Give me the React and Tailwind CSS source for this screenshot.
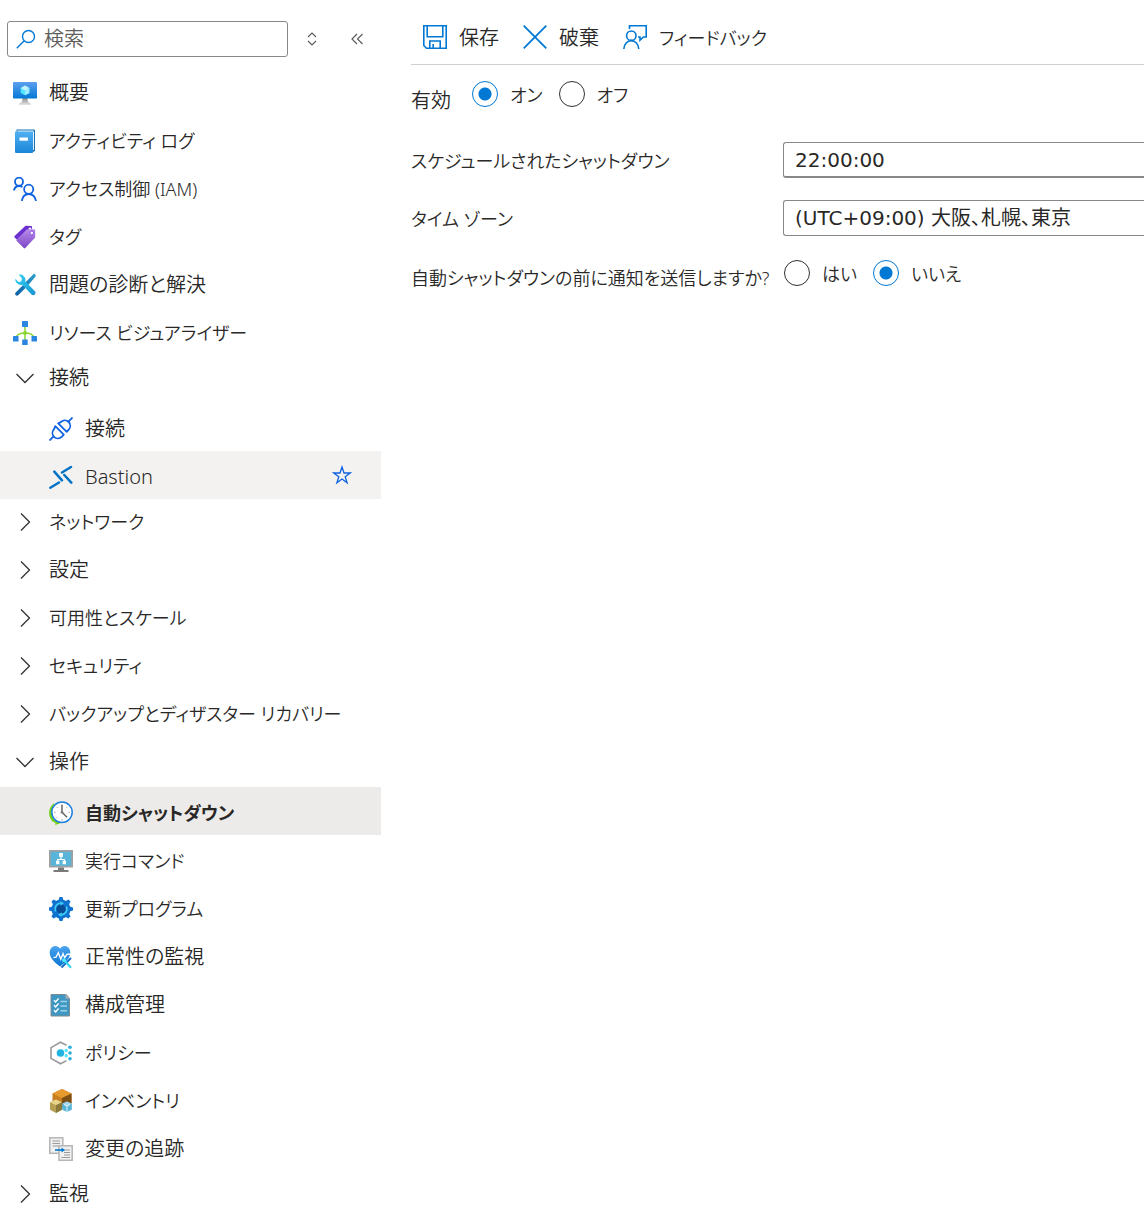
import { useState } from 'react'

function VmIcon() {
  return (
    <svg viewBox="0 0 24 24" className="size-6 shrink-0">
      <defs>
        <linearGradient id="vm-screen" x1="0" y1="0" x2="0" y2="1">
          <stop offset="0" stopColor="#5ea0ef" />
          <stop offset="1" stopColor="#0078d4" />
        </linearGradient>
        <linearGradient id="vm-stand" x1="0" y1="0" x2="0" y2="1">
          <stop offset="0" stopColor="#8c8c8c" />
          <stop offset="1" stopColor="#e6e6e6" />
        </linearGradient>
      </defs>
      <path d="M9.5 17h5c0 3 .5 4.600 3.500 5.500V24H6v-1.500c3-.900 3.500-2.500 3.500-5.500z" fill="url(#vm-stand)" />
      <rect y="1" width="24" height="16.500" rx="0.700" fill="url(#vm-screen)" />
      <path d="M12 4.500l4.300 2.400v5L12 14.300l-4.300-2.400v-5z" fill="#50e6ff" />
      <path d="M12 9.400l4.300-2.500v5L12 14.300z" fill="#9cebff" />
      <path d="M12 4.500l4.300 2.400L12 9.400 7.700 6.900z" fill="#c3f1ff" />
    </svg>
  )
}

function LogIcon() {
  return (
    <svg viewBox="0 0 24 24" className="size-6 shrink-0">
      <defs>
        <linearGradient id="log-cover" x1="0" y1="0" x2="0" y2="1">
          <stop offset="0" stopColor="#4fb0f2" />
          <stop offset="1" stopColor="#1b86d8" />
        </linearGradient>
      </defs>
      <path d="M3.500.5h17.200c.7 0 1.300.5 1.300 1.200v19.800c0 .7-.6 1.200-1.300 1.200H4z" fill="#1673b8" />
      <path d="M4.500 1.500H20.500v1.500H21v18H4z" fill="#e8f4fc" />
      <path d="M2 3.200C2 2.500 2.600 2.600 3.300 2.600H19c.6 0 1 .4 1 1V23c0 .6-.4 1-1 1H3.300c-.7 0-1.300-.6-1.300-1.300z" fill="url(#log-cover)" />
      <rect x="6.500" y="8.500" width="8.500" height="3.200" fill="#fff" />
    </svg>
  )
}

function PeopleIcon() {
  return (
    <svg viewBox="0 0 24 24" className="size-6 shrink-0" fill="none" stroke="#0f62e0" strokeWidth="1.800">
      <circle cx="6" cy="4.700" r="4" />
      <path d="M.9 13.500C1.500 10.700 3.400 9 6 9c1.400 0 2.500.4 3.400 1.200" />
      <circle cx="15.700" cy="12.300" r="4.600" />
      <path d="M8.800 24c.7-4.200 3.300-7 6.900-7s6.500 2.800 7.300 7" />
    </svg>
  )
}

function TagIcon() {
  return (
    <svg viewBox="0 0 24 24" className="size-6 shrink-0">
      <defs>
        <linearGradient id="tag-front" x1="0" y1="0" x2="0" y2="1">
          <stop offset="0" stopColor="#b88be8" />
          <stop offset="1" stopColor="#7b45c8" />
        </linearGradient>
      </defs>
      <path d="M12.500.8 18 1c.6 0 1 .4 1 1l.2 4.500L7.500 18 1.600 12.400c-.5-.5-.5-1 0-1.500z" fill="#6b2fd0" />
      <circle cx="17" cy="4" r="1.500" fill="#fff" />
      <path d="M14.500 4.300h6.300c.8 0 1.400.6 1.400 1.400v6.200c0 .5-.1.800-.5 1.200L12.300 23c-.5.500-1 .5-1.500 0L3.700 16c-.5-.5-.5-1 0-1.500L13.200 5c.4-.4.800-.7 1.300-.7z" fill="url(#tag-front)" />
      <circle cx="18.800" cy="8" r="1.800" fill="#fff" stroke="#9a5be8" />
    </svg>
  )
}

function ToolsIcon() {
  return (
    <svg viewBox="0 0 24 24" className="size-6 shrink-0">
      <defs>
        <linearGradient id="tools-wrench" x1="0" y1="0" x2="1" y2="1">
          <stop offset="0" stopColor="#32d4f5" />
          <stop offset="1" stopColor="#1a93d1" />
        </linearGradient>
        <linearGradient id="tools-driver" x1="1" y1="0" x2="0" y2="1">
          <stop offset="0" stopColor="#2f9fcc" />
          <stop offset="1" stopColor="#0a5ea8" />
        </linearGradient>
      </defs>
      <path d="M22.300 1.500l-1.200-.9-8.800 8.800-.5 2.500-1.500-.1-7.600 7.600c-.7.700-.7 1.900 0 2.700.8.700 1.900.700 2.700 0l7.600-7.600-.1-1.500 2.200-.7 7.700-9z" fill="url(#tools-driver)" />
      <path d="M5.500 1.600l3.800.1 2.500 2.700c.7 1.300.8 2.500.4 3.900l9.500 9.800c1.100 1.100 1 2.500.1 3.400-.9.900-2.300.9-3.300-.1l-9.300-9.600c-1.800.5-3.500.1-4.900-1.200C3 9.400 2 7.600 2.300 5.700L5.500 9l2.700-.6.800-2.800z" fill="url(#tools-wrench)" />
    </svg>
  )
}

function TopologyIcon() {
  return (
    <svg viewBox="0 0 24 24" className="size-6 shrink-0">
      <path d="M12 6v14M3 17c0-3 4-5 9-5s9 2 9 5" fill="none" stroke="#86d633" strokeWidth="1.500" />
      <circle cx="12" cy="12" r="2" fill="#86d633" />
      <rect x="9" y="0" width="6" height="6" rx="0.500" fill="#2a86e0" />
      <rect x="0" y="15" width="5.500" height="5.500" rx="0.500" fill="#2a86e0" />
      <rect x="9.200" y="18.500" width="5.500" height="5.500" rx="0.500" fill="#2a86e0" />
      <rect x="18.500" y="15" width="5.500" height="5.500" rx="0.500" fill="#2a86e0" />
    </svg>
  )
}

function PlugIcon() {
  return (
    <svg viewBox="0 0 24 24" className="size-6 shrink-0" fill="none" stroke="#0f62e0" strokeWidth="1.800">
      <path d="M.5 23.500l4.300-4.300M19.200 4.800L23.500.5" />
      <path d="M6.300 9.200l8.500 8.500-1.900 1.900c-2.300 2.200-5.700 2.400-7.900.2s-2-5.600.2-7.900z" strokeLinejoin="round" />
      <path d="M9.200 6.300l8.500 8.500 1.800-1.900c2.200-2.300 2.400-5.700.2-7.900s-5.600-2-7.900.2z" strokeLinejoin="round" />
    </svg>
  )
}

function BastionIcon() {
  return (
    <svg viewBox="0 0 24 24" className="size-6 shrink-0" fill="none" stroke="#0072c6" strokeWidth="2.500" strokeLinecap="round">
      <path d="M1.300 22.700l8.700-5.200" />
      <path d="M5.300 6.700l7.700 8.600" />
      <path d="M13 7.500l9-5.500" />
      <path d="M15.300 10l7 7.700" />
    </svg>
  )
}

function ClockIcon() {
  return (
    <svg viewBox="0 0 24 24" className="size-6 shrink-0">
      <path d="M4.500 2.500C-1 7-1.500 15.500 3.500 20.500l3 1.500-.5 2 5-1.500-3-4C3.500 16 2 7 6 3z" fill="#76d11f" />
      <circle cx="13" cy="11.300" r="10.200" fill="#fff" stroke="#1b7fdc" strokeWidth="1.500" />
      <path d="M13 3.200v1.500M13 18v1.500M5 11.300h1.500M19.500 11.300H21M7.500 5.800l1 1M18.500 5.800l-1 1M7.500 16.800l1-1" stroke="#a5a5a5" />
      <path d="M13 4v7.300l5 5" fill="none" stroke="#666" strokeWidth="1.500" />
      <circle cx="13" cy="11.300" r="1.300" fill="#777" />
    </svg>
  )
}

function RunIcon() {
  return (
    <svg viewBox="0 0 24 24" className="size-6 shrink-0">
      <rect y="1" width="24" height="17.500" fill="#a0a1a2" />
      <rect x="1.800" y="2.800" width="20.400" height="14" fill="#59b4d9" />
      <path d="M9 18.500h6V21h4.500v2h-15v-2H9z" fill="#7a7a7a" />
      <path d="M12 7v3.500M8.700 13v-2.500h6.600V13" fill="none" stroke="#fff" strokeWidth="1.200" />
      <path d="M10 4h4v3.700h-4zM7 11.800h3.400v3.400H7zM13.600 11.800H17v3.400h-3.400z" fill="#fff" />
    </svg>
  )
}

function GearIcon() {
  return (
    <svg viewBox="0 0 24 24" className="size-6 shrink-0">
      <g fill="#0f73cf">
        <circle cx="12" cy="12" r="9.500" />
        <path d="M10.500 0h3l1.500 5H9zM10.500 24h3l1.500-5H9zM0 10.500v3L5 15V9zM24 10.500v3L19 15V9z" />
        <path d="M10.500 0h3l1.500 5H9zM10.500 24h3l1.500-5H9zM0 10.500v3L5 15V9zM24 10.500v3L19 15V9z" transform="rotate(45 12 12)" />
      </g>
      <circle cx="12" cy="12" r="4.500" fill="#0a4c93" />
      <path d="M6.500 14.500C5 10 7.500 6.300 12 6.200M17.500 9.500c1.500 4.500-1 8.200-5.500 8.300" fill="none" stroke="#3ccbf4" strokeWidth="1.700" />
      <path d="M11.500 4.200l3.500 2-3.500 2.500zM12.500 19.800l-3.500-2 3.500-2.500z" fill="#3ccbf4" />
    </svg>
  )
}

function HeartIcon() {
  return (
    <svg viewBox="0 0 24 24" className="size-6 shrink-0">
      <defs>
        <linearGradient id="heart-fill" x1="0" y1="0" x2="0" y2="1">
          <stop offset="0" stopColor="#4ba3ee" />
          <stop offset="1" stopColor="#0b76d4" />
        </linearGradient>
      </defs>
      <path d="M11 21.500C5 17 .7 12.800.7 7.500.7 4 3 1 6.300 1c2 0 3.700 1 4.700 2.700C12 2 13.700 1 15.700 1 19 1 21.300 4 21.300 7.500c0 5.300-4.300 9.500-10.300 14z" fill="url(#heart-fill)" />
      <path d="M4.500 12.500l2.500-.3 2.300-4.500 2.500 6.500 2.200-5.500 1.700 4 2.500-3.500h4" fill="none" stroke="#fff" strokeWidth="1.400" />
      <path d="M12.500 22.500l9.500-9.500" stroke="#0f6fc9" strokeWidth="2" />
      <path d="M15 15l7 7.700" stroke="#32d4f5" strokeWidth="2.200" />
      <circle cx="15" cy="15.300" r="2" fill="#50e6ff" />
    </svg>
  )
}

function ChecklistIcon() {
  return (
    <svg viewBox="0 0 24 24" className="size-6 shrink-0">
      <path d="M2 1.500h15.200l3.300 4v17.500h-18.500z" fill="#3f97c3" stroke="#7d8a92" />
      <path d="M16.500 1l4.500 4.700h-4.500z" fill="#a7a9ab" />
      <path d="M5 7.300l1.600 1.700 3-3.500M5 12.300L6.600 14l3-3.500M5 17.300L6.600 19l3-3.500" fill="none" stroke="#fff" strokeWidth="1.400" />
      <path d="M11.500 8.500H18M11.500 13H18M11.500 17.800H18" stroke="#9fd3ea" strokeWidth="1.500" />
    </svg>
  )
}

function PolicyIcon() {
  return (
    <svg viewBox="0 0 24 24" className="size-6 shrink-0">
      <path d="M17.500 4.200L11.500 1.200 2 6.600v10.800l9.500 5.400 6-3.200" fill="none" stroke="#9b9b9b" strokeWidth="1.600" />
      <circle cx="11.500" cy="12" r="3.800" fill="#1fb5e0" />
      <g fill="#50e6ff">
        <circle cx="17.200" cy="9.500" r="1.700" />
        <circle cx="17.200" cy="14.700" r="1.700" />
      </g>
      <g fill="#2aaed8">
        <circle cx="21" cy="6.300" r="1.800" />
        <circle cx="21" cy="12" r="1.800" />
        <circle cx="21" cy="17.700" r="1.800" />
      </g>
    </svg>
  )
}

function BoxesIcon() {
  return (
    <svg viewBox="0 0 24 24" className="size-6 shrink-0">
      <path d="M13 0l9.500 4.500v10L13 19l-9.500-4.500v-10z" fill="#c97f20" />
      <path d="M13 0l9.500 4.500L13 9 3.500 4.500z" fill="#e79a2e" />
      <path d="M13 9l9.500-4.500v10L13 19z" fill="#7e4f14" />
      <path d="M7 10.500l6 2.800v7.500L7 24l-6-3.200v-7.500z" fill="#b59f52" />
      <path d="M7 10.500l6 2.800-6 3-6-3z" fill="#e8d48a" />
      <path d="M7 16.300l6-3v7.500L7 24z" fill="#8d7a3a" />
      <path d="M18 12.500l4.800 2.200v6L18 23l-4.800-2.300v-6z" fill="#59b4d9" />
      <path d="M18 12.500l4.800 2.200L18 17l-4.800-2.300z" fill="#a3d8ef" />
      <path d="M18 17v6M15 15.500l3 1.500 3-1.500" stroke="#e6f5fb" fill="none" />
    </svg>
  )
}

function ChangeIcon() {
  return (
    <svg viewBox="0 0 24 24" className="size-6 shrink-0">
      <rect x="0.800" y="0.800" width="13" height="15.500" fill="#f0f0f0" stroke="#b5b5b5" strokeWidth="1.500" />
      <path d="M3.500 4h7.500M3.500 6.500h7.500M3.500 9h7.500" stroke="#9a9a9a" />
      <rect x="10" y="8.800" width="13.200" height="14.500" fill="#f0f0f0" stroke="#b5b5b5" strokeWidth="1.500" />
      <path d="M15 13h6M15 15.500h6M15 18h6M12.500 20.500H21" stroke="#9a9a9a" />
      <path d="M6 13h8" stroke="#0078d4" strokeWidth="1.600" />
      <path d="M12.500 10.500L16 13l-3.500 2.500z" fill="#0078d4" />
    </svg>
  )
}

function Chevron({ open }) {
  return (
    <svg viewBox="0 0 24 24" className="size-6 shrink-0" fill="none" stroke="#323130" strokeWidth="1.300">
      <path d={open ? 'M3.500 8l8.500 8.500L20.500 8' : 'M8 3.500l8.500 8.500L8 20.500'} />
    </svg>
  )
}

function SaveIcon() {
  return (
    <svg viewBox="0 0 24 24" className="size-6 shrink-0" fill="none" stroke="#0078d4" strokeWidth="1.600">
      <path d="M.8.800h22.400v22.400H3.500L.8 20.500z" />
      <path d="M4.200.800v11h15.600v-11M6.800 23v-7h10.400v7M10.200 23v-4" />
    </svg>
  )
}

function DiscardIcon() {
  return (
    <svg viewBox="0 0 24 24" className="size-6 shrink-0" stroke="#0078d4" strokeWidth="1.800">
      <path d="M.7.700l22.600 22.600M23.300.7L.7 23.300" />
    </svg>
  )
}

function FeedbackIcon() {
  return (
    <svg viewBox="0 0 24 24" className="size-6 shrink-0" fill="none" stroke="#0078d4" strokeWidth="1.600">
      <path d="M6.500 4V.8h16.700V12h-2.700l-3.500 3.200V12h-2" />
      <circle cx="8.300" cy="10.700" r="4.700" />
      <path d="M.8 24c.3-4.800 3.400-8.400 7.500-8.400s7.200 3.600 7.500 8.400" />
    </svg>
  )
}

const topItems = [
  { label: '概要', icon: VmIcon },
  { label: 'アクティビティ ログ', icon: LogIcon },
  { label: 'アクセス制御 (IAM)', icon: PeopleIcon },
  { label: 'タグ', icon: TagIcon },
  { label: '問題の診断と解決', icon: ToolsIcon },
  { label: 'リソース ビジュアライザー', icon: TopologyIcon },
]

const sections = [
  {
    label: '接続',
    items: [
      { label: '接続', icon: PlugIcon },
      { label: 'Bastion', icon: BastionIcon, hovered: true },
    ],
  },
  { label: 'ネットワーク' },
  { label: '設定' },
  { label: '可用性とスケール' },
  { label: 'セキュリティ' },
  { label: 'バックアップとディザスター リカバリー' },
  {
    label: '操作',
    items: [
      { label: '自動シャットダウン', icon: ClockIcon, selected: true },
      { label: '実行コマンド', icon: RunIcon },
      { label: '更新プログラム', icon: GearIcon },
      { label: '正常性の監視', icon: HeartIcon },
      { label: '構成管理', icon: ChecklistIcon },
      { label: 'ポリシー', icon: PolicyIcon },
      { label: 'インベントリ', icon: BoxesIcon },
      { label: '変更の追跡', icon: ChangeIcon },
    ],
  },
  { label: '監視' },
]

const labelSize = (label) => (/[ァ-ヴ]/.test(label) ? 'text-[18px]' : 'text-[20px]')

function NavItem({ item, nested }) {
  const Icon = item.icon
  const bg = item.selected ? 'bg-[#edebe9] font-bold' : item.hovered ? 'bg-[#f3f2f1]' : ''
  return (
    <li className={`flex h-12 items-center pt-1 pr-[29px] ${nested ? 'pl-[49px]' : 'pl-[13px]'} ${bg}`}>
      <a href="#" className="flex flex-1 items-center gap-3 whitespace-nowrap">
        <Icon />
        <span className={labelSize(item.label)}>{item.label}</span>
      </a>
      {item.hovered && (
        <button type="button" aria-label="お気に入りに追加" className="pb-1">
          <svg viewBox="0 0 20 20" className="size-5" fill="none" stroke="#0f62e0" strokeWidth="1.300">
            <path d="M10 2l2 6h6.200l-5 3.700 1.900 6L10 14l-5.100 3.700 1.900-6L1.800 8H8z" />
          </svg>
        </button>
      )}
    </li>
  )
}

function Section({ section }) {
  const [open, setOpen] = useState(Boolean(section.items))
  return (
    <li>
      <button
        type="button"
        aria-expanded={open}
        onClick={() => setOpen(!open)}
        className="flex h-12 w-full items-center gap-3 pb-[2px] pl-[13px] whitespace-nowrap"
      >
        <Chevron open={open} />
        <span className={labelSize(section.label)}>{section.label}</span>
      </button>
      {open && section.items && (
        <ul>
          {section.items.map((item) => (
            <NavItem key={item.label} item={item} nested />
          ))}
        </ul>
      )}
    </li>
  )
}

function Sidebar() {
  return (
    <nav className="w-[381px] shrink-0">
      <div className="flex h-[67px] items-center pt-[11px] pr-3 pl-[7px]">
        <label className="flex h-9 flex-1 items-center gap-2 rounded-[3px] border border-[#8a8886] px-2">
          <svg viewBox="0 0 20 20" className="size-5 shrink-0" fill="none" stroke="#0078d4" strokeWidth="1.400">
            <circle cx="12.500" cy="7.500" r="6" />
            <path d="M8.200 11.800L.8 19.200" />
          </svg>
          <input type="text" placeholder="検索" aria-label="検索" className="w-full min-w-0 outline-none placeholder:text-[#605e5c]" />
        </label>
        <button type="button" aria-label="すべて展開" className="ml-3 flex w-6 justify-center">
          <svg viewBox="0 0 12 16" className="h-4 w-3" fill="none" stroke="#605e5c" strokeWidth="1.200">
            <path d="M2 6l4-4 4 4M2 10l4 4 4-4" />
          </svg>
        </button>
        <button type="button" aria-label="折りたたむ" className="ml-[21px] flex w-6 justify-center">
          <svg viewBox="0 0 14 14" className="size-3.5" fill="none" stroke="#605e5c" strokeWidth="1.200">
            <path d="M7 2L2 7l5 5M12.500 2l-5 5 5 5" />
          </svg>
        </button>
      </div>
      <ul>
        {topItems.map((item) => (
          <NavItem key={item.label} item={item} />
        ))}
        {sections.map((section) => (
          <Section key={section.label} section={section} />
        ))}
      </ul>
    </nav>
  )
}

function Radio({ name, label, defaultChecked }) {
  return (
    <label className="flex items-center gap-3">
      <input
        type="radio"
        name={name}
        defaultChecked={defaultChecked}
        className="size-[26px] appearance-none rounded-full border border-[#323130] checked:border-[#0078d4] checked:bg-[radial-gradient(circle,#0078d4_6px,transparent_7px)]"
      />
      <span className="pt-[2px] text-[18px]">{label}</span>
    </label>
  )
}

function ToolbarButton({ icon: Icon, label }) {
  return (
    <button type="button" className="flex items-center gap-3 px-3">
      <Icon />
      <span className={`pt-[2px] ${labelSize(label)}`}>{label}</span>
    </button>
  )
}

export default function App() {
  return (
    <div className="flex h-screen overflow-hidden bg-white font-['Noto_Sans','Noto_Sans_CJK_JP',sans-serif] text-[20px] leading-7 font-[350] text-[#292827] [font-feature-settings:'palt']">
      <Sidebar />
      <main className="ml-[30px] min-w-0 flex-1">
        <div className="flex h-[65px] items-center border-b border-[#d2d0ce] pt-[10px]">
          <ToolbarButton icon={SaveIcon} label="保存" />
          <ToolbarButton icon={DiscardIcon} label="破棄" />
          <ToolbarButton icon={FeedbackIcon} label="フィードバック" />
        </div>
        <form className="flex flex-col gap-[22px] pt-[14px]">
          <div role="radiogroup" aria-labelledby="enabled-label" className="flex h-[41px] items-start">
            <span id="enabled-label" className="w-[61px] pt-2">有効</span>
            <div className="flex gap-4">
              <Radio name="enabled" label="オン" defaultChecked />
              <Radio name="enabled" label="オフ" />
            </div>
          </div>
          <div className="flex items-center">
            <label htmlFor="time" className="w-[372px] shrink-0 pt-[2px] text-[18px]">スケジュールされたシャットダウン</label>
            <input
              id="time"
              type="text"
              defaultValue="22:00:00"
              className="h-9 min-w-0 flex-1 rounded-l-[3px] border border-r-0 border-b-2 border-[#8a8886] px-[11px] font-['DejaVu_Sans','Noto_Sans_CJK_JP',sans-serif] font-normal outline-none"
            />
          </div>
          <div className="flex items-center">
            <label htmlFor="zone" className="w-[372px] shrink-0 pt-[2px] text-[18px]">タイム ゾーン</label>
            <select
              id="zone"
              className="h-9 min-w-0 flex-1 appearance-none rounded-l-[3px] border border-r-0 border-[#8a8886] px-[11px] font-['DejaVu_Sans','Noto_Sans_CJK_JP',sans-serif] font-normal outline-none"
            >
              <option>(UTC+09:00) 大阪、札幌、東京</option>
            </select>
          </div>
          <div role="radiogroup" aria-labelledby="notify-label" className="flex items-start">
            <span id="notify-label" className="w-[373px] shrink-0 pt-[6px] text-[18px] whitespace-nowrap">自動シャットダウンの前に通知を送信しますか?</span>
            <div className="flex gap-4">
              <Radio name="notify" label="はい" />
              <Radio name="notify" label="いいえ" defaultChecked />
            </div>
          </div>
        </form>
      </main>
    </div>
  )
}
